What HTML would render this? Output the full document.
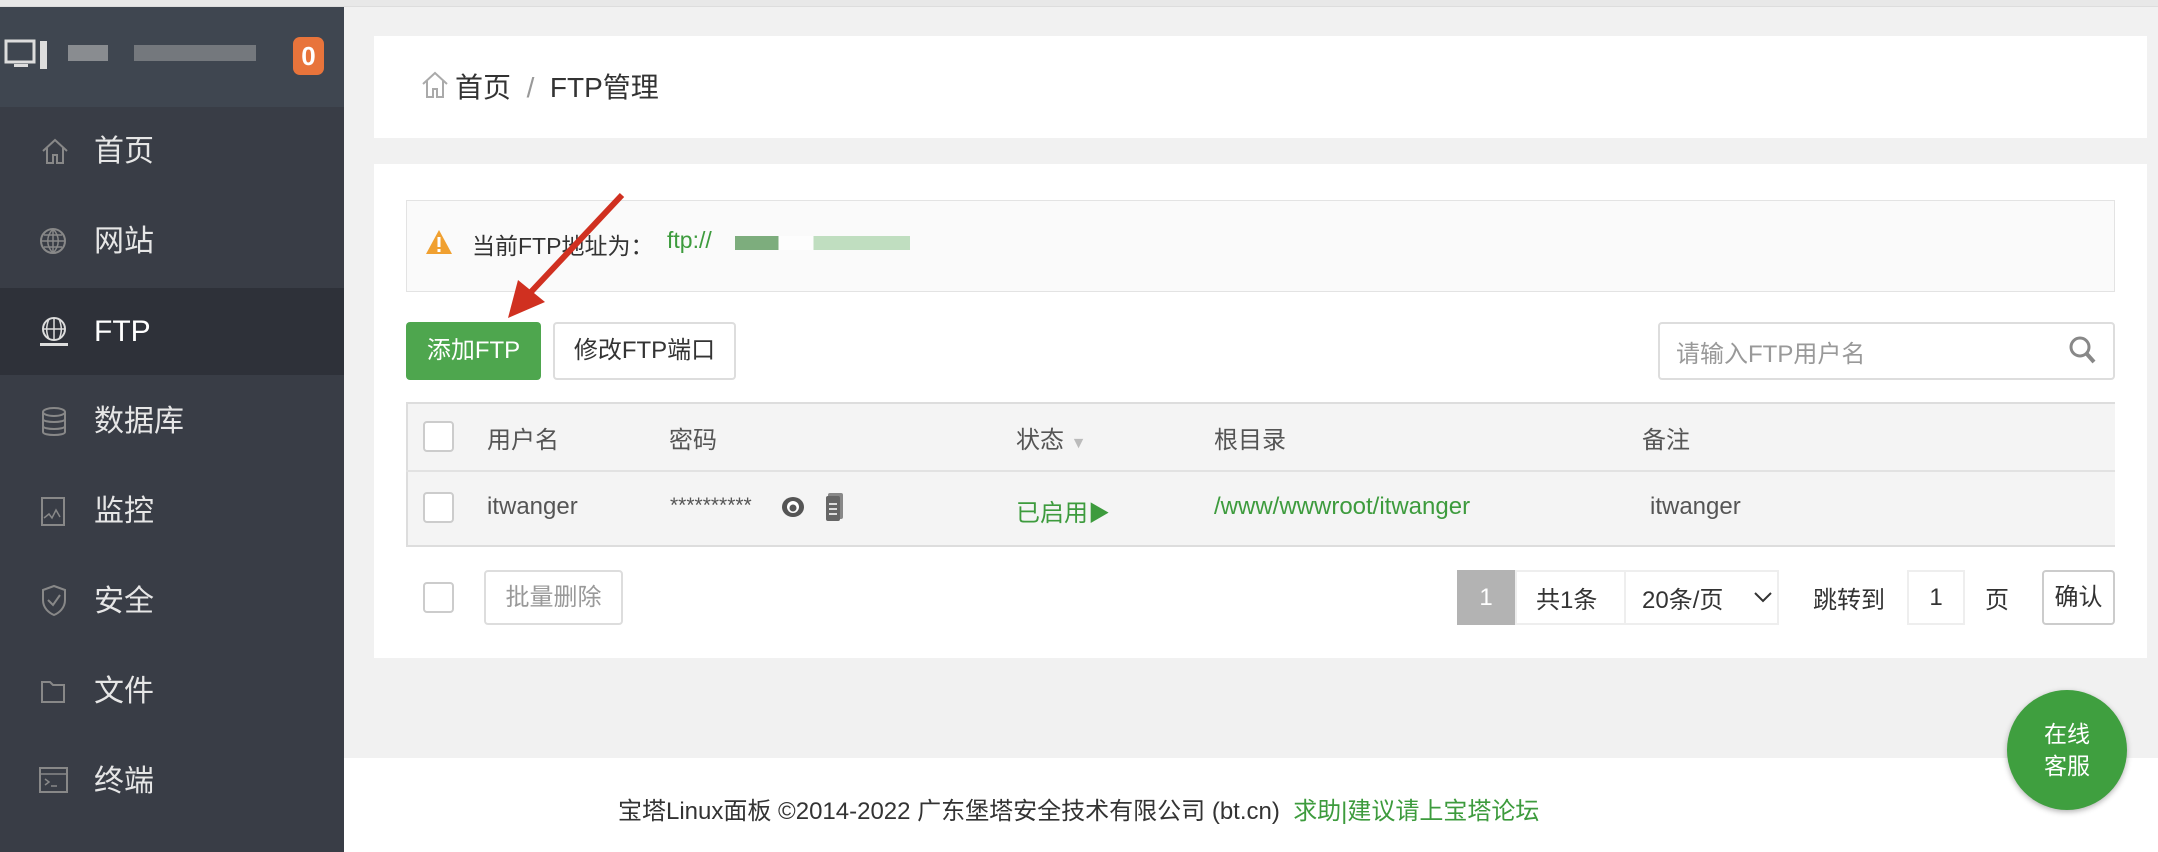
<!DOCTYPE html>
<html><head><meta charset="utf-8"><style>
*{margin:0;padding:0;box-sizing:border-box}
body{width:2158px;height:852px;overflow:hidden;background:#f1f1f1;font-family:"Liberation Sans","Noto Sans CJK SC",sans-serif;position:relative;color:#555}
.a{position:absolute}
#top{left:0;top:0;width:2158px;height:7px;background:#e8e8e8;border-bottom:1px solid #ddd}
#side{left:0;top:7px;width:344px;height:845px;background:#393d46}
#shead{left:0;top:7px;width:344px;height:100px;background:#3f4650}
.mi{position:absolute;left:0;width:344px;height:87px;color:#e6e6e6;font-size:30px;line-height:87px;padding-left:94px}
.card{background:#fff;position:absolute}
.btn{position:absolute;border-radius:4px;font-size:24px;text-align:center}
.cb{position:absolute;width:31px;height:31px;border:2px solid #ccc;border-radius:4px;background:#fff}
.t{position:absolute;font-size:24px;white-space:nowrap}
</style></head><body>
<div class="a" id="top"></div>
<div class="a" id="side"></div>
<div class="a" id="shead"></div>
<svg class="a" style="left:4px;top:38px" width="46" height="34"><rect x="2" y="3" width="28" height="21" fill="none" stroke="#ddd" stroke-width="3"/><rect x="10" y="26" width="14" height="3" fill="#ddd"/><rect x="36" y="3" width="7" height="28" fill="#ddd"/></svg>
<div class="a" style="left:68px;top:45px;width:40px;height:16px;background:#bbb;opacity:.6"></div>
<div class="a" style="left:134px;top:45px;width:122px;height:16px;background:#aaa;opacity:.5"></div>
<div class="a" style="left:293px;top:37px;width:31px;height:38px;background:#e8743b;border-radius:7px;color:#fff;font-size:26px;font-weight:bold;text-align:center;line-height:38px">0</div>
<div class="mi" style="top:108px">首页<svg style="position:absolute;left:40px;top:28px" width="30" height="30"><path d="M3 15 L15 4 L27 15 M7 12 V27 H13 V19 H17 V27 H23 V12" fill="none" stroke="#888" stroke-width="2"/></svg></div>
<div class="mi" style="top:198px">网站<svg style="position:absolute;left:38px;top:28px" width="30" height="30"><circle cx="15" cy="15" r="12" fill="none" stroke="#888" stroke-width="2"/><path d="M3 15H27M15 3V27M6 9H24M6 21H24M15 3C8 10 8 20 15 27C22 20 22 10 15 3" fill="none" stroke="#888" stroke-width="1.5"/></svg></div>
<div class="mi" style="top:288px;background:#2e3139;color:#fff">FTP<svg style="position:absolute;left:38px;top:28px" width="32" height="32"><circle cx="16" cy="13" r="11" fill="none" stroke="#ddd" stroke-width="2"/><path d="M5 13H27M16 2V24M11 3C8 10 8 17 11 23M21 3C24 10 24 17 21 23" fill="none" stroke="#ddd" stroke-width="1.5"/><rect x="2" y="27" width="28" height="3" fill="#ddd"/></svg></div>
<div class="mi" style="top:378px">数据库<svg style="position:absolute;left:40px;top:28px" width="30" height="32"><ellipse cx="14" cy="6" rx="11" ry="4" fill="none" stroke="#888" stroke-width="2"/><path d="M3 6V26C3 30 25 30 25 26V6M3 13C3 17 25 17 25 13M3 20C3 24 25 24 25 20" fill="none" stroke="#888" stroke-width="2"/></svg></div>
<div class="mi" style="top:468px">监控<svg style="position:absolute;left:40px;top:28px" width="30" height="32"><rect x="2" y="2" width="22" height="27" fill="none" stroke="#888" stroke-width="2"/><path d="M4 22L9 18L12 22L16 14L20 21" fill="none" stroke="#888" stroke-width="1.5"/></svg></div>
<div class="mi" style="top:558px">安全<svg style="position:absolute;left:40px;top:26px" width="30" height="34"><path d="M14 2L25 6V16C25 24 19 29 14 31C9 29 3 24 3 16V6Z" fill="none" stroke="#888" stroke-width="2"/><path d="M8 16L13 21L20 11" fill="none" stroke="#888" stroke-width="2"/></svg></div>
<div class="mi" style="top:648px">文件<svg style="position:absolute;left:40px;top:30px" width="30" height="28"><path d="M2 4H10L13 7H24V24H2Z" fill="none" stroke="#888" stroke-width="2"/></svg></div>
<div class="mi" style="top:738px">终端<svg style="position:absolute;left:38px;top:28px" width="32" height="30"><rect x="2" y="2" width="27" height="24" fill="none" stroke="#888" stroke-width="2"/><path d="M2 8H29M7 13L11 16L7 19M13 20H19" fill="none" stroke="#888" stroke-width="1.5"/></svg></div>

<div class="card" style="left:374px;top:36px;width:1773px;height:102px"></div>
<svg class="a" style="left:420px;top:70px" width="30" height="30"><path d="M3 14L15 3L27 14M7 11V27H13V19H17V27H23V11" fill="none" stroke="#aaa" stroke-width="2"/></svg>
<div class="t" style="left:455px;top:66px;font-size:28px;color:#333">首页 &nbsp;<span style="color:#999">/</span>&nbsp; FTP管理</div>

<div class="card" style="left:374px;top:164px;width:1773px;height:494px"></div>
<div class="a" style="left:406px;top:200px;width:1709px;height:92px;background:#fafafa;border:1px solid #e3e3e3"></div>
<svg class="a" style="left:425px;top:229px" width="28" height="26"><path d="M14 1L27 25H1Z" fill="#f0a030"/><rect x="12.5" y="8" width="3" height="10" fill="#fff"/><rect x="12.5" y="20" width="3" height="3" fill="#fff"/></svg>
<div class="t" style="left:472px;top:227px;font-size:23px;color:#333">当前FTP地址为：</div>
<div class="t" style="left:667px;top:227px;font-size:23px;color:#3d9b3d">ftp://</div>
<div class="a" style="left:735px;top:236px;width:175px;height:14px;background:linear-gradient(90deg,#2a7a2a 0 25%,#fff 25% 45%,#9c9 45% 100%);opacity:.6"></div>

<div class="btn" style="left:406px;top:322px;width:135px;height:58px;background:#4ea64e;color:#fff;line-height:58px">添加FTP</div>
<div class="btn" style="left:553px;top:322px;width:183px;height:58px;border:2px solid #ddd;color:#333;line-height:54px;background:#fff">修改FTP端口</div>
<div class="a" style="left:1658px;top:322px;width:457px;height:58px;border:2px solid #ddd;border-radius:4px;background:#fff"></div>
<div class="t" style="left:1676px;top:334px;color:#999">请输入FTP用户名</div>
<svg class="a" style="left:2068px;top:335px" width="30" height="32"><circle cx="12" cy="12" r="9" fill="none" stroke="#888" stroke-width="3"/><path d="M18 18L26 27" stroke="#888" stroke-width="4"/></svg>

<div class="a" style="left:406px;top:402px;width:1709px;height:145px;background:#f4f4f4;border-top:2px solid #ddd;border-bottom:2px solid #ddd;border-left:2px solid #ddd"></div>
<div class="a" style="left:406px;top:470px;width:1709px;height:2px;background:#e2e2e2"></div>
<div class="cb" style="left:423px;top:421px"></div>
<div class="t" style="left:487px;top:420px">用户名</div>
<div class="t" style="left:669px;top:420px">密码</div>
<div class="t" style="left:1016px;top:420px">状态 <span style="color:#bbb;font-size:16px">▼</span></div>
<div class="t" style="left:1214px;top:420px">根目录</div>
<div class="t" style="left:1642px;top:420px">备注</div>
<div class="cb" style="left:423px;top:492px"></div>
<div class="t" style="left:487px;top:493px">itwanger</div>
<div class="t" style="left:670px;top:494px;font-size:21px">**********</div>
<svg class="a" style="left:780px;top:494px" width="26" height="26"><ellipse cx="13" cy="13" rx="11" ry="10" fill="#555"/><ellipse cx="13" cy="13" rx="6" ry="6" fill="#fff"/><circle cx="13" cy="14" r="3.5" fill="#555"/></svg>
<svg class="a" style="left:825px;top:492px" width="20" height="30"><rect x="3" y="1" width="15" height="26" rx="2" fill="#888"/><rect x="1" y="4" width="14" height="25" rx="2" fill="#666"/><path d="M4 12H12M4 17H12M4 22H12" stroke="#ddd" stroke-width="2"/></svg>
<div class="t" style="left:1016px;top:493px;color:#3d9b3d">已启用<span style="font-size:22px">▶</span></div>
<div class="t" style="left:1214px;top:493px;color:#3d9b3d">/www/wwwroot/itwanger</div>
<div class="t" style="left:1650px;top:493px">itwanger</div>

<div class="cb" style="left:423px;top:582px"></div>
<div class="btn" style="left:484px;top:570px;width:139px;height:55px;border:2px solid #ddd;color:#999;line-height:51px">批量删除</div>
<div class="a" style="left:1457px;top:570px;width:58px;height:55px;background:#b3b3b3;color:#fff;font-size:24px;text-align:center;line-height:55px">1</div>
<div class="a" style="left:1515px;top:570px;width:264px;height:55px;border:2px solid #eee;background:#fff"></div>
<div class="a" style="left:1624px;top:570px;width:2px;height:55px;background:#eee"></div>
<div class="t" style="left:1536px;top:580px;color:#333">共1条</div>
<div class="t" style="left:1642px;top:580px;color:#333">20条/页</div>
<svg class="a" style="left:1753px;top:590px" width="20" height="14"><path d="M2 3L10 11L18 3" fill="none" stroke="#333" stroke-width="2"/></svg>
<div class="t" style="left:1813px;top:580px;color:#333">跳转到</div>
<div class="a" style="left:1907px;top:570px;width:58px;height:55px;border:2px solid #eee;background:#fff;font-size:24px;text-align:center;line-height:51px;color:#333">1</div>
<div class="t" style="left:1985px;top:580px;color:#333">页</div>
<div class="btn" style="left:2042px;top:570px;width:73px;height:55px;border:2px solid #ccc;color:#333;line-height:51px;background:#fff">确认</div>

<div class="a" style="left:344px;top:758px;width:1814px;height:94px;background:#fff"></div>
<div class="t" style="left:618px;top:791px;color:#333;font-size:24px">宝塔Linux面板 ©2014-2022 广东堡塔安全技术有限公司 (bt.cn) &nbsp;<span style="color:#3d9b3d">求助|建议请上宝塔论坛</span></div>
<div class="a" style="left:2007px;top:690px;width:120px;height:120px;border-radius:50%;background:#3f9f3f;box-shadow:0 2px 6px rgba(0,0,0,.3);color:#fff;font-size:23px;text-align:center;padding-top:28px;line-height:32px">在线<br>客服</div>

<svg class="a" style="left:0;top:0" width="2158" height="852"><path d="M622 195L530 293" stroke="#d03020" stroke-width="6"/><path d="M508 318L518 280L545 302Z" fill="#d03020"/></svg>
</body></html>
